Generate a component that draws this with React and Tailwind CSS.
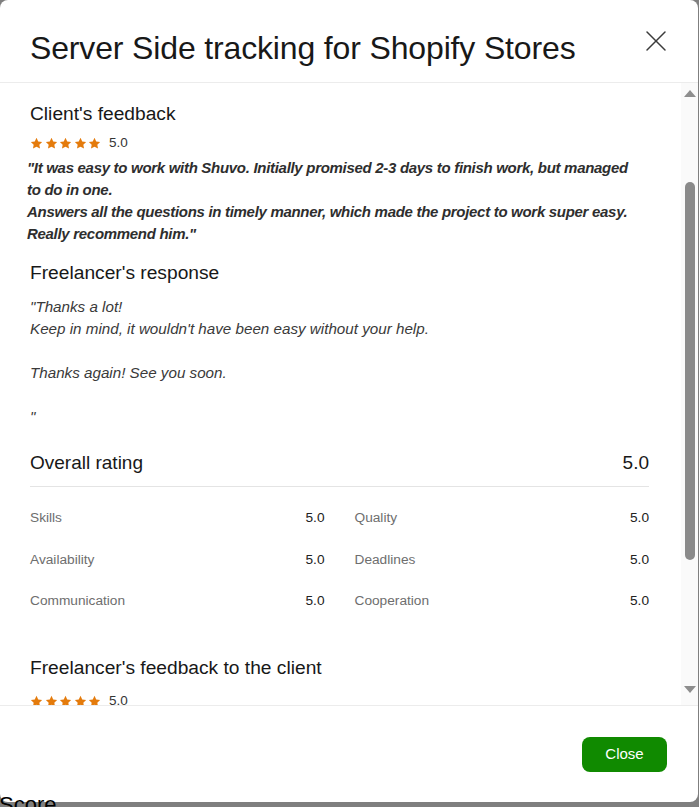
import { X } from 'lucide-react';

const ratings = [
  ['Skills', '5.0', 'Quality', '5.0'],
  ['Availability', '5.0', 'Deadlines', '5.0'],
  ['Communication', '5.0', 'Cooperation', '5.0'],
];

function Stars({ score }) {
  return (
    <div className="flex items-center h-4">
      <div className="flex items-center gap-[1.5px]">
        {[0, 1, 2, 3, 4].map((i) => (
          <svg key={i} viewBox="0 0 24 24" className="w-[13px] h-[13px] fill-[#e47b0c]">
            <path d="M12 1.5l3.2 6.6 7.2 1-5.2 5.1 1.3 7.2L12 18l-6.5 3.4 1.3-7.2L1.6 9.1l7.2-1L12 1.5z" />
          </svg>
        ))}
      </div>
      <span className="ml-[8px] text-[13.5px] text-[#353535]">{score}</span>
    </div>
  );
}

function Scrollbar() {
  return (
    <div className="w-[17px] shrink-0 bg-[#fafafa] flex flex-col items-center">
      <div className="h-[20px] flex items-center justify-center">
        <div className="w-0 h-0 border-x-[6px] border-x-transparent border-b-[7px] border-b-[#8e8e8e]" />
      </div>
      <div className="mt-[79px] w-[10px] h-[378px] rounded-full bg-[#8a8a8a]" />
      <div className="flex-1" />
      <div className="h-[20px] mb-[6px] flex items-center justify-center">
        <div className="w-0 h-0 border-x-[6px] border-x-transparent border-t-[7px] border-t-[#8e8e8e]" />
      </div>
    </div>
  );
}

export default function App() {
  return (
    <div className="relative h-[807px] w-[699px] overflow-hidden bg-[#7f7f7f] font-['Liberation_Sans',Arial,sans-serif]">
      <div className="relative z-10 w-[698px] h-[802px] bg-white rounded-[8px] flex flex-col overflow-hidden">
        <header className="h-[83px] shrink-0 border-b border-[#ececec] flex items-start justify-between pl-[30px] pr-[33px]">
          <h2 className="mt-[28px] text-[32px] leading-[40px] tracking-[-0.15px] text-[#181818]">
            Server Side tracking for Shopify Stores
          </h2>
          <button className="mt-[23px] text-[#3b3b3b]">
            <X className="w-[36px] h-[36px] -mr-[9px]" strokeWidth={1} />
          </button>
        </header>

        <div className="flex flex-1 min-h-0">
          <div className="flex-1 overflow-hidden pl-[30px] pr-[32px] pt-[19px]">
            <h3 className="text-[19.2px] leading-6 text-[#181818]">Client's feedback</h3>
            <div className="mt-[9px]">
              <Stars score="5.0" />
            </div>
            <p className="mt-[6px] -ml-[3px] whitespace-pre-line text-[15px] leading-[22px] font-bold italic tracking-[-0.3px] text-[#2e2e2e]">
              {'"It was easy to work with Shuvo. Initially promised 2-3 days to finish work, but managed\nto do in one.\nAnswers all the questions in timely manner, which made the project to work super easy.\nReally recommend him."'}
            </p>

            <h3 className="mt-[16px] text-[19.2px] leading-6 text-[#181818]">Freelancer's response</h3>
            <p className="mt-[11px] whitespace-pre-line text-[15.2px] leading-[22px] italic text-[#3a3a3a]">
              {'"Thanks a lot!\nKeep in mind, it wouldn\'t have been easy without your help.\n\nThanks again! See you soon.\n\n"'}
            </p>

            <div className="mt-[23px] pb-[11px] border-b border-[#e4e4e4] flex items-center justify-between text-[19px] leading-6 text-[#181818]">
              <span>Overall rating</span>
              <span>5.0</span>
            </div>

            <div className="mt-[21px] grid grid-cols-2 gap-x-[30px] gap-y-[21.5px] text-[13.7px] leading-5">
              {ratings.map(([a, av, b, bv]) => (
                <div key={a} className="contents">
                  <div className="flex justify-between">
                    <span className="text-[#6e6e6e]">{a}</span>
                    <span className="text-[#222]">{av}</span>
                  </div>
                  <div className="flex justify-between">
                    <span className="text-[#6e6e6e]">{b}</span>
                    <span className="text-[#222]">{bv}</span>
                  </div>
                </div>
              ))}
            </div>

            <h3 className="mt-[45px] text-[19.2px] leading-6 text-[#181818]">Freelancer's feedback to the client</h3>
            <div className="mt-[13px]">
              <Stars score="5.0" />
            </div>
          </div>
          <Scrollbar />
        </div>

        <footer className="h-[97px] shrink-0 border-t border-[#ececec] flex items-center justify-end pr-[31px]">
          <button className="w-[85px] h-[35px] rounded-[8px] bg-[#108a00] text-white text-[15px]">Close</button>
        </footer>
      </div>
      <div className="absolute z-20 left-[-1px] top-[794px] text-[22px] leading-none text-black">Score</div>
    </div>
  );
}
